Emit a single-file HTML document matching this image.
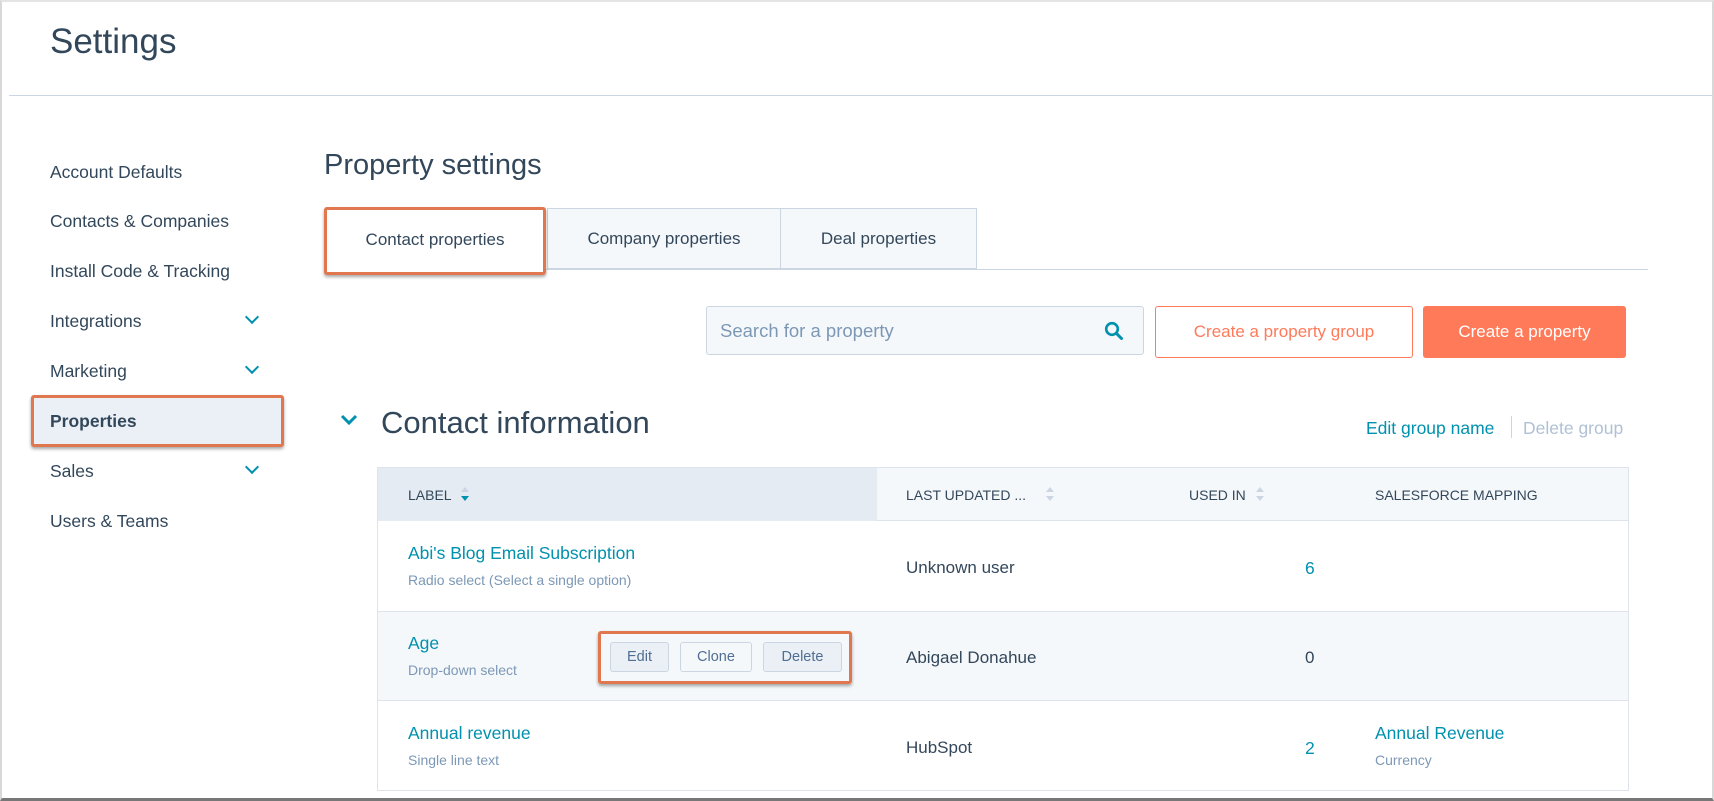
<!DOCTYPE html>
<html><head><meta charset="utf-8"><style>
*{box-sizing:border-box;margin:0;padding:0}
body{width:1714px;height:801px;background:#fff;font-family:"Liberation Sans",sans-serif;color:#33475b;position:relative;overflow:hidden}
.a{position:absolute;white-space:nowrap}
.frame{position:absolute;left:0;top:0;width:1714px;height:801px;border-left:2px solid #d8d8d8;border-top:2px solid #e4e4e4;border-right:2px solid #d8d8d8;border-bottom:3px solid #777}
.side{font-size:17.5px;color:#33475b}
.chev{position:absolute;width:10px;height:10px;border-right:2.5px solid #0091ae;border-bottom:2.5px solid #0091ae;transform:rotate(45deg)}
.tab{position:absolute;top:208px;height:61px;background:#f5f8fa;border:1px solid #cbd6e2;font-size:17px;display:flex;align-items:center;justify-content:center}
.btn{position:absolute;font-size:17px;display:flex;align-items:center;justify-content:center;border-radius:3px}
.th{font-size:14px;color:#33475b;top:487px}
.lnk{color:#0091ae;font-size:17.5px}
.sub{color:#7c98b6;font-size:14px}
.cell{font-size:17px}
.sb{position:absolute;top:642px;height:30px;background:#eaf0f6;border:1px solid #cbd6e2;border-radius:3px;font-size:14.5px;color:#506e91;display:flex;align-items:center;justify-content:center}
.sort{position:absolute;width:0;height:0;border-left:4px solid transparent;border-right:4px solid transparent}
</style></head><body>
<div class="frame"></div>
<div class="a" style="left:50px;top:22px;font-size:35px;color:#33475b">Settings</div>
<div class="a" style="left:9px;top:95px;width:1703px;height:1px;background:#cbd6e2"></div>

<div class="a side" style="left:50px;top:162px">Account Defaults</div>
<div class="a side" style="left:50px;top:211px">Contacts &amp; Companies</div>
<div class="a side" style="left:50px;top:261px">Install Code &amp; Tracking</div>
<div class="a side" style="left:50px;top:311px">Integrations</div>
<div class="chev" style="left:247px;top:312px"></div>
<div class="a side" style="left:50px;top:361px">Marketing</div>
<div class="chev" style="left:247px;top:362px"></div>
<div class="a" style="left:31px;top:395px;width:253px;height:52px;background:#eaf0f6;border:3px solid #e0774f;border-radius:3px;box-shadow:0 2px 3px rgba(0,0,0,.35)"></div>
<div class="a side" style="left:50px;top:411px;font-weight:bold">Properties</div>
<div class="a side" style="left:50px;top:461px">Sales</div>
<div class="chev" style="left:247px;top:462px"></div>
<div class="a side" style="left:50px;top:511px">Users &amp; Teams</div>

<div class="a" style="left:324px;top:149px;font-size:29px">Property settings</div>
<div class="a" style="left:326px;top:269px;width:1322px;height:1px;background:#cbd6e2"></div>
<div class="tab" style="left:547px;width:234px">Company properties</div>
<div class="tab" style="left:780px;width:197px">Deal properties</div>
<div class="a" style="left:324px;top:207px;width:222px;height:68px;background:#fff;border:3px solid #e0774f;border-radius:3px;box-shadow:0 2px 3px rgba(0,0,0,.35);display:flex;align-items:center;justify-content:center;font-size:17px;padding-bottom:3px">Contact properties</div>

<div class="a" style="left:706px;top:306px;width:438px;height:49px;background:#f5f8fa;border:1px solid #cbd6e2;border-radius:3px"></div>
<div class="a" style="left:720px;top:320px;font-size:18.5px;color:#7c98b6">Search for a property</div>
<svg class="a" style="left:1104px;top:321px" width="20" height="20" viewBox="0 0 20 20"><circle cx="8" cy="8" r="5.8" fill="none" stroke="#0091ae" stroke-width="2.6"/><line x1="12.3" y1="12.3" x2="17.5" y2="17.5" stroke="#0091ae" stroke-width="3" stroke-linecap="round"/></svg>
<div class="btn" style="left:1155px;top:306px;width:258px;height:52px;border:1px solid #ff7a59;color:#ff7a59">Create a property group</div>
<div class="btn" style="left:1423px;top:306px;width:203px;height:52px;background:#ff7a59;color:#fff">Create a property</div>

<svg class="a" style="left:340px;top:414px" width="18" height="12" viewBox="0 0 18 12"><path d="M2 2 L9 9 L16 2" fill="none" stroke="#0091ae" stroke-width="3"/></svg>
<div class="a" style="left:381px;top:405px;font-size:31px">Contact information</div>
<div class="a lnk" style="left:1366px;top:418px">Edit group name</div>
<div class="a" style="left:1511px;top:416px;width:1px;height:22px;background:#cbd6e2"></div>
<div class="a" style="left:1523px;top:418px;font-size:17.5px;color:#b0c1d4">Delete group</div>

<div class="a" style="left:377px;top:467px;width:1252px;height:324px;border:1px solid #dfe3eb"></div>
<div class="a" style="left:378px;top:468px;width:1250px;height:53px;background:#f5f8fa;border-bottom:1px solid #dfe3eb"></div>
<div class="a" style="left:378px;top:468px;width:499px;height:53px;background:#e5ebf2"></div>
<div class="a th" style="left:408px">LABEL</div>
<div class="sort" style="left:461px;top:487px;border-bottom:5px solid #cbd6e2"></div>
<div class="sort" style="left:461px;top:496px;border-top:5px solid #0091ae"></div>
<div class="a th" style="left:906px">LAST UPDATED ...</div>
<div class="sort" style="left:1046px;top:487px;border-bottom:5px solid #cbd6e2"></div>
<div class="sort" style="left:1046px;top:496px;border-top:5px solid #cbd6e2"></div>
<div class="a th" style="left:1189px">USED IN</div>
<div class="sort" style="left:1256px;top:487px;border-bottom:5px solid #cbd6e2"></div>
<div class="sort" style="left:1256px;top:496px;border-top:5px solid #cbd6e2"></div>
<div class="a th" style="left:1375px">SALESFORCE MAPPING</div>

<div class="a" style="left:378px;top:611px;width:1250px;height:1px;background:#dfe3eb"></div>
<div class="a" style="left:378px;top:612px;width:1250px;height:89px;background:#f5f8fa;border-bottom:1px solid #dfe3eb"></div>

<div class="a lnk" style="left:408px;top:543px">Abi's Blog Email Subscription</div>
<div class="a sub" style="left:408px;top:572px">Radio select (Select a single option)</div>
<div class="a cell" style="left:906px;top:558px">Unknown user</div>
<div class="a lnk" style="left:1305px;top:558px">6</div>

<div class="a lnk" style="left:408px;top:633px">Age</div>
<div class="a sub" style="left:408px;top:662px">Drop-down select</div>
<div class="a" style="left:598px;top:631px;width:254px;height:53px;border:3px solid #e0774f;border-radius:3px;box-shadow:0 2px 3px rgba(0,0,0,.35)"></div>
<div class="sb" style="left:610px;width:59px">Edit</div>
<div class="sb" style="left:680px;width:72px;background:#f5f8fa">Clone</div>
<div class="sb" style="left:763px;width:79px">Delete</div>
<div class="a cell" style="left:906px;top:648px">Abigael Donahue</div>
<div class="a cell" style="left:1305px;top:648px">0</div>

<div class="a lnk" style="left:408px;top:723px">Annual revenue</div>
<div class="a sub" style="left:408px;top:752px">Single line text</div>
<div class="a cell" style="left:906px;top:738px">HubSpot</div>
<div class="a lnk" style="left:1305px;top:738px">2</div>
<div class="a lnk" style="left:1375px;top:723px">Annual Revenue</div>
<div class="a sub" style="left:1375px;top:752px">Currency</div>
</body></html>
